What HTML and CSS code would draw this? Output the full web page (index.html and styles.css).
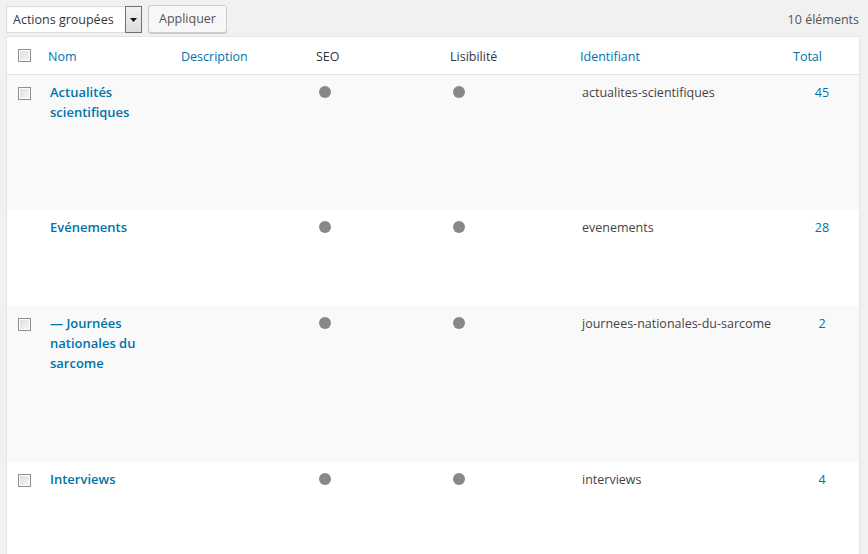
FILE: index.html
```html
<!DOCTYPE html>
<html lang="fr">
<head>
<meta charset="utf-8">
<title>Catégories</title>
<link rel="stylesheet" href="styles.css">
</head>
<body>
<div class="wrap">
  <div class="tablenav">
    <div class="bulk">
      <div class="select">
        <span class="select-label">Actions groupées</span>
        <span class="select-arrow"><svg width="7" height="4" viewBox="0 0 7 4"><path d="M0 0h7L3.5 4z" fill="#111"/></svg></span>
      </div>
      <button class="button">Appliquer</button>
    </div>
    <div class="count">10 éléments</div>
  </div>
  <table class="list">
    <colgroup>
      <col class="c-cb"><col class="c-name"><col class="c-desc"><col class="c-seo"><col class="c-read"><col class="c-slug"><col class="c-total">
    </colgroup>
    <thead>
      <tr>
        <th class="cb"><span class="checkbox"></span></th>
        <th><a class="sort">Nom</a></th>
        <th><a class="sort">Description</a></th>
        <th class="plain">SEO</th>
        <th class="plain">Lisibilité</th>
        <th><a class="sort">Identifiant</a></th>
        <th><a class="sort">Total</a></th>
      </tr>
    </thead>
    <tbody>
      <tr class="alt h-135">
        <td class="cb"><span class="checkbox"></span></td>
        <td class="name"><a>Actualités scientifiques</a></td>
        <td></td>
        <td><span class="dot"></span></td>
        <td><span class="dot"></span></td>
        <td class="slug">actualites-scientifiques</td>
        <td class="total"><a>45</a></td>
      </tr>
      <tr class="h-96">
        <td class="cb"></td>
        <td class="name"><a>Evénements</a></td>
        <td></td>
        <td><span class="dot"></span></td>
        <td><span class="dot"></span></td>
        <td class="slug">evenements</td>
        <td class="total"><a>28</a></td>
      </tr>
      <tr class="alt h-156">
        <td class="cb"><span class="checkbox"></span></td>
        <td class="name"><a>— Journées nationales du sarcome</a></td>
        <td></td>
        <td><span class="dot"></span></td>
        <td><span class="dot"></span></td>
        <td class="slug">journees-nationales-du-sarcome</td>
        <td class="total"><a>2</a></td>
      </tr>
      <tr class="h-96">
        <td class="cb"><span class="checkbox"></span></td>
        <td class="name"><a>Interviews</a></td>
        <td></td>
        <td><span class="dot"></span></td>
        <td><span class="dot"></span></td>
        <td class="slug">interviews</td>
        <td class="total"><a>4</a></td>
      </tr>
    </tbody>
  </table>
</div>
</body>
</html>
```
FILE: styles.css
```css
* { box-sizing: border-box; }
html, body { margin: 0; padding: 0; background: #f1f1f1; }
body {
  font-family: "Open Sans", "Noto Sans", "Liberation Sans", sans-serif;
  font-size: 12.5px;
  color: #444;
  overflow: hidden;
  height: 554px;
}
.wrap { padding: 5px 8px 0 6px; }
.tablenav {
  display: flex;
  justify-content: space-between;
  align-items: flex-start;
  height: 31px;
}
.bulk { display: flex; align-items: flex-start; gap: 6px; }
.select {
  display: flex;
  align-items: stretch;
  height: 27px;
  width: 136px;
  margin-top: 1px;
  background: #fff;
  border: 1px solid #ddd;
  box-shadow: inset 0 1px 2px rgba(0,0,0,0.04);
}
.select-label {
  flex: 1;
  padding-left: 6px;
  line-height: 25px;
  color: #32373c;
  white-space: nowrap;
}
.select-arrow {
  width: 17px;
  border: 1px solid #707070;
  background: linear-gradient(#f2f2f2, #dcdcdc);
  display: flex;
  align-items: center;
  justify-content: center;
  margin: -1px -1px -1px 0;
}
.button {
  font: inherit;
  color: #555;
  height: 28px;
  width: 79px;
  padding: 0 0 1px;
  text-align: center;
  background: #f7f7f7;
  border: 1px solid #ccc;
  border-radius: 3px;
  box-shadow: 0 1px 0 #ccc;
  line-height: 26px;
}
.count { color: #555; padding-right: 1px; line-height: 20px; margin-top: 5px; }
.list {
  width: 854px;
  border: 1px solid #e5e5e5;
  border-collapse: separate;
  border-spacing: 0;
  background: #fff;
  table-layout: fixed;
  box-shadow: 0 1px 1px rgba(0,0,0,0.04);
}
.c-cb { width: 33px; }
.c-name { width: 133px; }
.c-desc { width: 135px; }
.c-seo { width: 134px; }
.c-read { width: 130px; }
.c-slug { width: 213px; }
.c-total { width: 74px; }
th {
  text-align: left;
  font-weight: 400;
  padding: 10px 8px 7px;
  line-height: 20px;
  height: 38px;
  vertical-align: top;
  border-bottom: 1px solid #e1e1e1;
  white-space: nowrap;
}
th.cb, td.cb { padding: 8px 0 0 11px; }
.sort { color: #0073aa; }
.plain { color: #32373c; }
td {
  vertical-align: top;
  padding: 8px 10px;
  line-height: 20px;
  color: #555;
}
tr.alt td { background: #f9f9f9; }
tr.h-135 td { height: 135px; }
tr.h-96 td { height: 96px; }
tr.h-156 td { height: 156px; }
.checkbox {
  display: block;
  width: 13px;
  height: 13px;
  margin-top: 4px;
  border: 1px solid #8f8f8f;
  background: linear-gradient(135deg, #dcdcdc, #f8f8f8);
  box-shadow: inset 0 0 0 1px #fdfdfd;
}
.name { padding: 7px 10px 8px; font-size: 13px; }
.name a { color: #0073aa; font-weight: 600; }
.dot {
  display: block;
  width: 12px;
  height: 12px;
  border-radius: 50%;
  background: #888;
  margin: 3px 0 0 1px;
}
.slug { padding-left: 10px; color: #444; white-space: nowrap; }
.total { text-align: center; padding: 8px 0; }
.total a { color: #0073aa; }
```
